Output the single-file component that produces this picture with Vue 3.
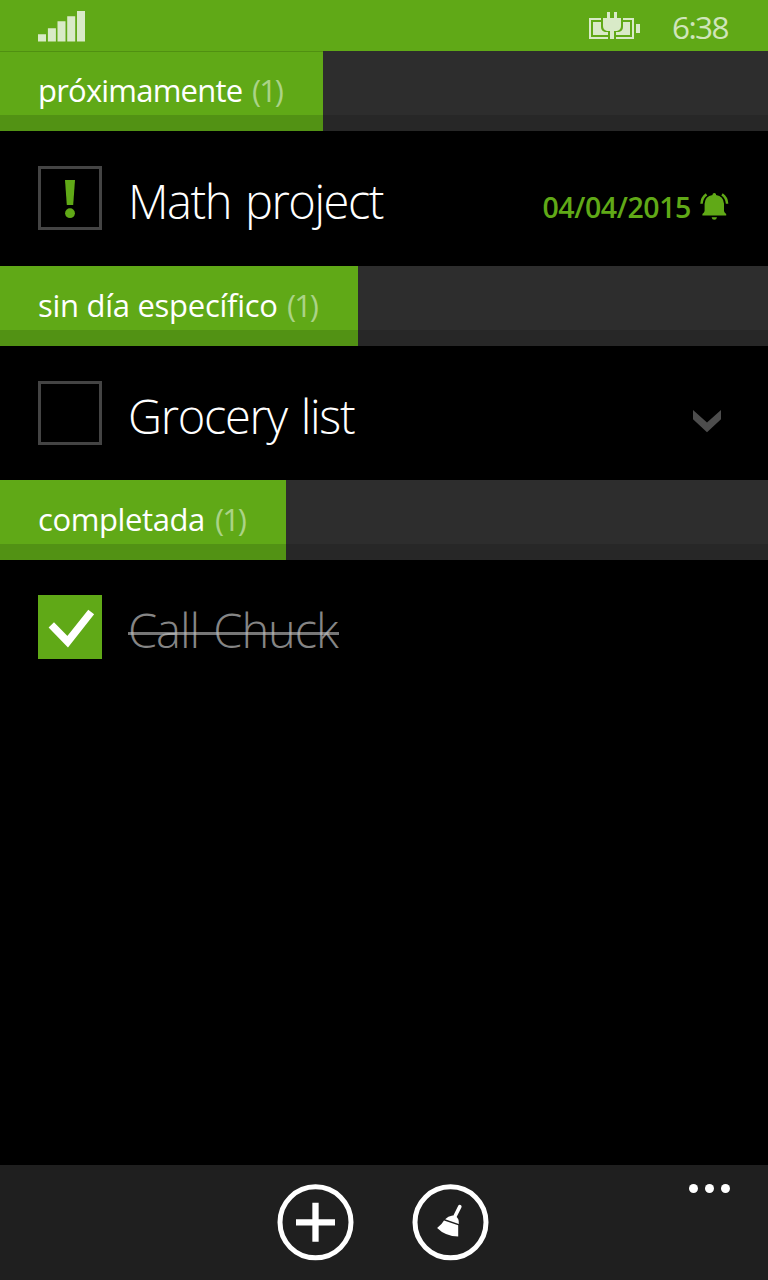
<script setup>
const groups = [
  { name: 'próximamente', cls: 'soon', count: 1, tasks: [{ title: 'Math project', cls: 'math', priority: true, due: '04/04/2015' }] },
  { name: 'sin día específico', cls: 'someday', count: 1, tasks: [{ title: 'Grocery list', cls: 'grocery', expandable: true }] },
  { name: 'completada', cls: 'finished', count: 1, tasks: [{ title: 'Call Chuck', cls: 'call', done: true }] },
]
</script>

<template>
  <div class="phone">
    <header class="status">
      <svg class="signal" width="48" height="31" viewBox="0 0 48 31" fill="#d9eac8">
        <path d="M0 23.3h8V30.500H0zM9.900 17.300h8V30.500h-8zM19.500 10.300h8V30.500h-8zM29.200 5.300h8V30.500h-8zM39 0h8v30.500h-8z" />
      </svg>
      <svg class="battery" width="51" height="27" viewBox="0 0 51 27">
        <path d="M12 7H1v19h18M34 7h10v19H27" fill="none" stroke="#d9eac8" stroke-width="2" />
        <path d="M4 10h8v5q0 4 4 5h3v3H4zM34 10h7v13H27v-3h3q4-1 4-5zM47 12h4v9h-4z" fill="#d9eac8" />
        <path d="M14 6h4V0h3v6h4V0h3v6h4v8q0 4-4 5h-3v8h-4v-8h-3q-4-1-4-5z" fill="#d9eac8" />
      </svg>
      <span class="clock">6:38</span>
    </header>

    <main class="list">
      <section v-for="g in groups" :key="g.name" :class="['group', g.cls]">
        <div class="band">
          <h2 class="tab"><span class="name">{{ g.name }}</span><span class="count">({{ g.count }})</span></h2>
        </div>
        <div v-for="t in g.tasks" :key="t.title" class="task">
          <div :class="['box', { checked: t.done }]">
            <svg v-if="t.priority" width="64" height="64" viewBox="0 0 64 64" fill="#60a917">
              <path d="M27 14h10L35.200 39h-6.400z" /><circle cx="32" cy="47.200" r="4.900" />
            </svg>
            <svg v-if="t.done" width="64" height="64" viewBox="0 0 64 64">
              <path d="M13.300 29.800 29.700 46.700 53.200 17" fill="none" stroke="#fff" stroke-width="7.500" />
            </svg>
          </div>
          <div :class="['title', t.cls, { done: t.done }]">{{ t.title }}</div>
          <div v-if="t.due" class="due">
            <span>{{ t.due }}</span>
            <svg width="29" height="28" viewBox="0 0 29 28" fill="#60a917">
              <path d="M12.600 1q1.700-2 3.400 0v.9q7.600 1.200 8 8.800v7.200q.2 1.500 2.200 3v1.600H2.400v-1.600q2-1.500 2.200-3v-7.200Q5 3.100 12.600 1.900zM11.600 24.200h5.400q-.4 2.600-2.700 2.600t-2.700-2.600z" />
              <path d="M6.500 1.400Q1.800 4.600 1.500 10.800M22 1.400Q26.800 4.600 27.100 10.800" fill="none" stroke="#60a917" stroke-width="2.500" />
            </svg>
          </div>
          <svg v-if="t.expandable" class="chevron" width="28" height="23" viewBox="0 0 28 23">
            <path d="M0 0 14 12.400 28 0v9.300L14 22.300 0 9.300z" fill="#4d4d4d" />
          </svg>
        </div>
      </section>
    </main>

    <footer class="appbar">
      <button class="round" aria-label="add">
        <svg width="77" height="77" viewBox="-.5 -.3 77 77">
          <circle cx="38" cy="38" r="35.500" fill="none" stroke="#fff" stroke-width="5" />
          <path d="M38 18.500v39M18.500 38h39" stroke="#fff" stroke-width="6.300" />
        </svg>
      </button>
      <button class="round" aria-label="clean">
        <svg width="77" height="77" viewBox="-.5 -.3 77 77">
          <circle cx="38" cy="38" r="35.500" fill="none" stroke="#fff" stroke-width="5" />
          <path d="M47.300 22.300 42 33" stroke="#fff" stroke-width="3.600" stroke-linecap="round" />
          <path d="M32.600 35Q35.500 32 40 31.300l3.300.7q3.500 2.400 3 7.600zM31.500 36.300 45.700 41V52.200Q33 52.200 24.600 43.800q4.600-3.300 6.900-7.500z" fill="#fff" />
        </svg>
      </button>
      <div class="more"><i></i><i></i><i></i></div>
    </footer>
  </div>
</template>

<style>
body { background: #000; }
</style>

<style scoped>
.phone { width: 768px; height: 1280px; background: #000; color: #fff; display: flex; flex-direction: column; overflow: hidden; font-family: "Open Sans", "Noto Sans", sans-serif; }
.status { height: 51px; background: #60a917; display: flex; align-items: flex-start; padding: 0 38px; flex: none; box-sizing: border-box; }
.signal { margin-top: 11px; }
.battery { margin: 12px 0 0 auto; }
.clock { width: 58px; margin-left: 32px; font-size: 31.500px; font-weight: 400; line-height: 53px; color: #d0e5bb; letter-spacing: -1.600px; white-space: nowrap; }
.list { flex: 1; }
.group { height: 214.500px; }
.band { height: 80px; background: linear-gradient(#2d2d2d 64px, #272727 64px); }
.tab { margin: 0; height: 80px; box-sizing: border-box; padding-left: 38px; background: linear-gradient(#60a917 64px, #529214 64px); font-size: 31px; font-weight: 400; line-height: 79px; white-space: nowrap; display: flex; justify-content: space-between; padding-right: 41px; }
.soon .tab { width: 323px; background: linear-gradient(#509011 1px, #60a917 1px 64px, #529214 64px); }
.someday .tab { width: 358px; }
.finished .tab { width: 286px; }
.name { letter-spacing: -0.400px; }
.soon .name { letter-spacing: -0.800px; }
.someday .name { letter-spacing: -0.280px; }
.count { color: #abd387; font-weight: 400; letter-spacing: -2px; }
.task { height: 134.500px; display: flex; align-items: flex-start; padding: 35px 38px 0; box-sizing: border-box; }
.box { width: 64px; height: 64px; border: 3px solid #444; box-sizing: border-box; flex: none; }
.box svg { display: block; margin: -3px; }
.box.checked { border: 0; background: #60a917; }
.box.checked svg { margin: 0; }
.title { position: relative; margin-left: 26px; font-size: 47px; font-weight: 300; line-height: 70px; white-space: nowrap; }
.math { letter-spacing: -1.450px; word-spacing: 3px; }
.grocery { letter-spacing: -1.300px; word-spacing: 3px; }
.call { letter-spacing: -1.050px; word-spacing: 3px; }
.title.done { color: #858585; }
.title.done::after { content: ""; position: absolute; left: 0; width: 211px; top: 37px; height: 3px; background: rgba(190, 190, 190, .62); }
.due { margin-left: auto; display: flex; color: #60a917; font-size: 28.500px; font-weight: 600; line-height: 83px; letter-spacing: -0.400px; }
.due svg { margin: 27px 1px 0 9px; }
.chevron { margin: 29px 9px 0 auto; }
.appbar { height: 115px; background: #1f1f1f; display: flex; justify-content: center; align-items: flex-start; gap: 58px; position: relative; flex: none; padding: 19px 2px 0 0; box-sizing: border-box; }
.round { width: 77px; height: 77px; padding: 0; border: 0; background: none; }
.round svg { display: block; }
.more { position: absolute; right: 38px; top: 19px; display: flex; gap: 7px; }
.more i { width: 9px; height: 9px; border-radius: 50%; background: #fff; }
</style>
